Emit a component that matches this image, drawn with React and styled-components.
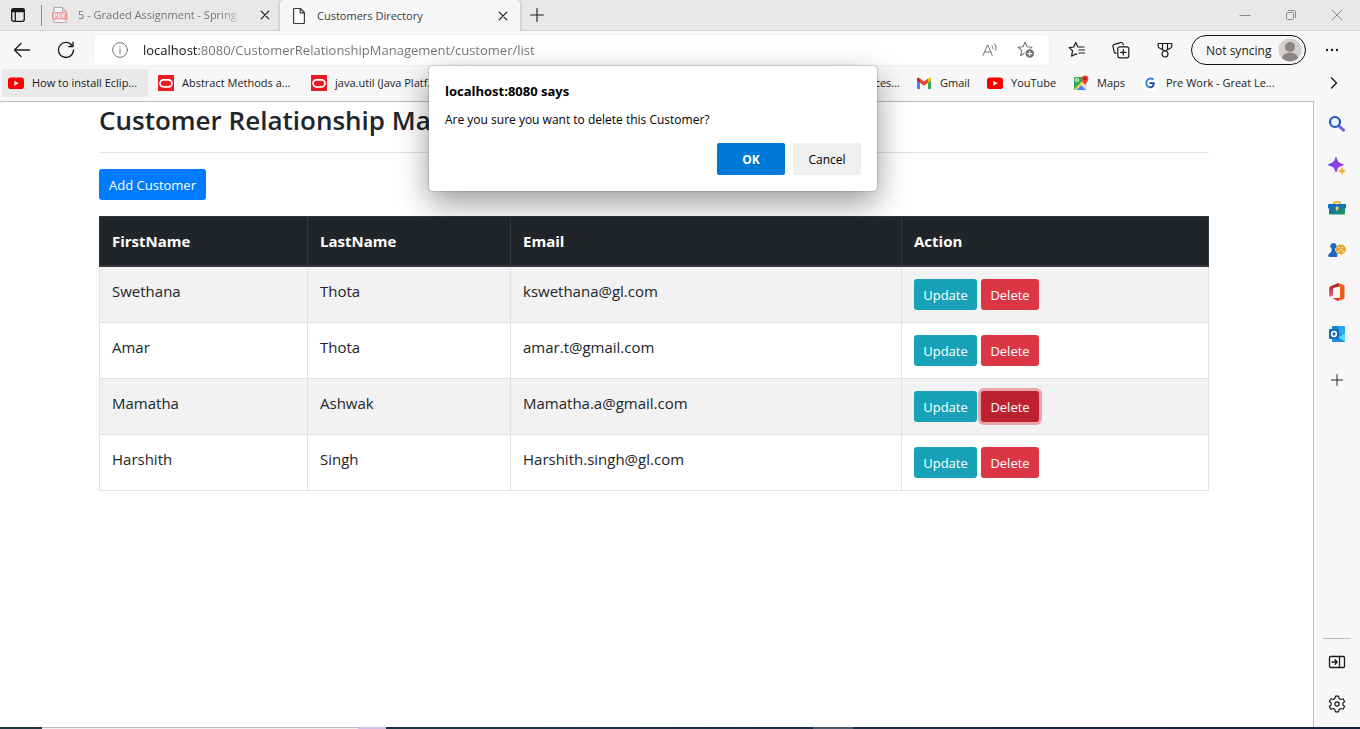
import React from "react";
import styled, { createGlobalStyle, css } from "styled-components";

const GlobalStyle = createGlobalStyle`
  *, *::before, *::after { box-sizing: border-box; }
  body { margin: 0; background: #f7f7f7; font-family: "Open Sans", "Noto Sans", sans-serif; color: #212529; }
  button, input { font-family: inherit; margin: 0; }
  svg { display: block; flex: none; }
`;

/* ---------- browser frame ---------- */

const Browser = styled.div`
  position: relative;
  display: flex;
  flex-direction: column;
  min-height: 100vh;
`;

const IconButton = styled.button`
  display: flex;
  align-items: center;
  justify-content: center;
  flex: none;
  width: ${(p) => p.$w || 24}px;
  height: ${(p) => p.$h || 24}px;
  padding: 0;
  border: 0;
  background: none;
  color: ${(p) => p.$color || "#1b1b1b"};
`;

const TabStrip = styled.header`
  display: flex;
  height: 31px;
  background: #e8e8e8;
  box-shadow: inset 0 -1px #d4d4d4;
`;

const TabMenu = styled.div`
  display: flex;
  align-items: center;
  width: 42px;
  height: 30px;
  padding-left: 6px;
  &::after {
    content: "";
    width: 1px;
    height: 21px;
    margin-left: auto;
    background: #8c8c8c;
  }
`;

const Tab = styled.div`
  display: flex;
  align-items: center;
  width: ${(p) => (p.$active ? 240 : 238)}px;
  height: ${(p) => (p.$active ? 31 : 30)}px;
  padding: 0 5px 0 ${(p) => (p.$active ? 11 : 10)}px;
  gap: 10px;
  font-size: 11px;
  line-height: 16px;
  color: ${(p) => (p.$active ? "#3b3b3b" : "#767676")};
  ${(p) => p.$active && css`
    background: #f7f7f7;
    border-radius: 4px 4px 0 0;
    box-shadow: 0 0 3px rgba(0, 0, 0, 0.3);
    clip-path: inset(0 -4px 0 -4px);
  `}
`;

const TabTitle = styled.span`
  flex: 1;
  overflow: hidden;
  white-space: nowrap;
  ${(p) => p.$fade && css`
    mask-image: linear-gradient(90deg, #000 85%, transparent);
  `}
`;

const WindowControls = styled.div`
  display: flex;
  height: 30px;
  margin-left: auto;
`;

const Toolbar = styled.div`
  display: flex;
  align-items: center;
  height: 38px;
  padding-right: 16px;
  background: #f7f7f7;
`;

const AddressBar = styled.label`
  display: flex;
  align-items: center;
  flex: 1;
  height: 30px;
  margin: 0 12px 0 6px;
  padding: 0 11px 0 18px;
  background: #fff;
  border-radius: 4px;
  box-shadow: 0 0 2px rgba(0, 0, 0, 0.08);
`;

const AddressInput = styled.input`
  flex: 1;
  min-width: 0;
  height: 24px;
  margin-left: 15px;
  padding: 0;
  border: 0;
  outline: 0;
  font-size: 13px;
  line-height: 24px;
  color: transparent;
  background: linear-gradient(90deg, #111 56px, #717171 56px);
  background-clip: text;
  -webkit-background-clip: text;
`;

const ToolGroup = styled.div`
  display: flex;
  align-items: center;
  gap: 12px;
`;

const SyncButton = styled.button`
  display: flex;
  align-items: center;
  justify-content: space-between;
  width: 115px;
  height: 30px;
  margin: 0 14px 0 10px;
  padding: 0 3px 0 14px;
  border: 1px solid #111;
  border-radius: 15px;
  background: none;
  font-size: 12px;
  color: #1b1b1b;
  white-space: nowrap;
`;

const BookmarkBar = styled.nav`
  display: flex;
  align-items: flex-start;
  gap: 4px;
  height: 32px;
  padding: 0 14px 0 2px;
  background: #f7f7f7;
`;

const Bookmark = styled.a`
  display: flex;
  align-items: center;
  flex: none;
  gap: 8px;
  width: ${(p) => p.$w}px;
  height: 28px;
  padding: 0 6px;
  border-radius: 3px;
  background: ${(p) => (p.$hover ? "#e9e9e9" : "none")};
  font-size: 11px;
  line-height: 16px;
  color: #1b1b1b;
  text-decoration: none;
  white-space: nowrap;
`;

const CoveredBookmark = styled(Bookmark)`
  flex: 1;
  justify-content: flex-end;
`;

const BookmarkOverflow = styled.div`
  display: flex;
  justify-content: flex-end;
  width: 56px;
`;

const Body = styled.div`
  display: flex;
  flex: 1;
`;

const Viewport = styled.main`
  flex: 1;
  min-width: 0;
  padding-right: 5px;
  background: #fff;
  border: solid #bdbdbd;
  border-width: 1px 1px 0 0;
`;

const Sidebar = styled.aside`
  display: flex;
  flex-direction: column;
  align-items: center;
  gap: 18px;
  width: 46px;
  padding: 11px 0;
`;

const SidebarEnd = styled.div`
  display: flex;
  flex-direction: column;
  align-items: center;
  gap: 18px;
  width: 28px;
  margin-top: auto;
  padding-top: 11px;
  border-top: 1px solid #bdbdbd;
`;

const Taskbar = styled.footer`
  display: flex;
  height: 2px;
  background: linear-gradient(90deg, #21393f, #1c2f44 60%, #16213f);
`;

const TaskbarPart = styled.span`
  width: ${(p) => p.$w}px;
  background: ${(p) => p.$bg || "none"};
`;

/* ---------- page ---------- */

const Container = styled.div`
  max-width: 1140px;
  margin: 0 auto;
  padding: 0 15px;
`;

const Title = styled.h3`
  margin: 0;
  padding: 1px 0 15px;
  font-size: 26px;
  font-weight: 600;
  line-height: 34px;
  border-bottom: 1px solid #e2e2e2;
`;

const buttonColors = {
  primary: "#007bff",
  info: "#17a2b8",
  danger: "#dc3545",
  dangerActive: "#bd2130",
};

const ActionButton = styled.button`
  height: 31px;
  width: ${(p) => p.$w}px;
  padding: 2px 0 0;
  border: 0;
  border-radius: 3px;
  background: ${(p) => buttonColors[p.$kind]};
  color: #fff;
  font-size: 13px;
  line-height: 21px;
  white-space: nowrap;
  ${(p) => p.$kind === "dangerActive" && css`
    box-shadow: 0 0 0 3px rgba(225, 83, 97, 0.5);
  `}
`;

const PageActions = styled.div`
  display: flex;
  padding: 16px 0;
`;

const CustomerTable = styled.table`
  width: 100%;
  table-layout: fixed;
  border-collapse: collapse;
  font-size: 15px;
  line-height: 24px;
`;

const HeadCell = styled.th`
  width: ${(p) => (p.$w ? `${p.$w}px` : "auto")};
  height: 49px;
  padding: 0 12px;
  border: 1px solid #32383e;
  border-bottom-width: 2px;
  background: #212529;
  color: #fff;
  font-weight: 700;
  text-align: left;
`;

const Row = styled.tr`
  background: ${(p) => (p.$striped ? "#f2f2f2" : "#fff")};
`;

const Cell = styled.td`
  height: 56px;
  padding: 12px 12px;
  border: 1px solid #dee2e6;
  vertical-align: top;
`;

const ButtonPair = styled.div`
  display: flex;
  gap: 4px;
`;

/* ---------- dialog ---------- */

const DialogLayer = styled.div`
  position: absolute;
  top: 66px;
  left: 0;
  right: 54px;
  display: flex;
  justify-content: center;
`;

const Dialog = styled.section`
  width: 448px;
  padding: 16px;
  border-radius: 4px;
  background: #fff;
  color: #000;
  box-shadow: 0 0 2px rgba(0, 0, 0, 0.4), 0 12px 32px rgba(0, 0, 0, 0.4);
`;

const DialogTitle = styled.h2`
  margin: 0 0 10px;
  font-size: 13px;
  font-weight: 700;
  line-height: 18px;
`;

const DialogText = styled.p`
  margin: 0 0 13px;
  font-size: 12px;
  line-height: 20px;
`;

const DialogButtons = styled.div`
  display: flex;
  justify-content: flex-end;
  gap: 8px;
`;

const DialogButton = styled.button`
  width: 68px;
  height: 32px;
  padding: 0;
  border: 0;
  border-radius: 2px;
  background: ${(p) => (p.$primary ? "#0078d7" : "#efefef")};
  color: ${(p) => (p.$primary ? "#fff" : "#000")};
  font-size: 12px;
  font-weight: ${(p) => (p.$primary ? 700 : 500)};
`;

/* ---------- icons ---------- */

const Line = ({ size = 16, box = size, w = 1, children }) => (
  <svg width={size} height={size} viewBox={`0 0 ${box} ${box}`} fill="none" stroke="currentColor" strokeWidth={w} strokeLinecap="round" strokeLinejoin="round">
    {children}
  </svg>
);

const TabMenuIcon = () => (
  <Line w={1.3}>
    <rect x="1.7" y="1.7" width="12.6" height="12.6" rx="2" />
    <path d="M2 2.500h12v2.200H2z" fill="currentColor" />
    <path d="M5.3 5v9" />
  </Line>
);
const PdfIcon = () => (
  <svg width="16" height="16" viewBox="0 0 16 16">
    <path d="M2 .5h8.500L14 4v11.500H2z" fill="#f4f4f4" stroke="#a9a9a9" />
    <path d="M10.500.5V4H14" fill="none" stroke="#a9a9a9" />
    <rect x="0" y="5" width="15.500" height="7.500" rx="1" fill="#f19c9c" />
    <path d="M2.500 11.200V6.700h1.100a1.200 1.200 0 0 1 0 2.500H2.500M6.700 6.700V11h.7c2.200 0 2.200-4.300 0-4.300zM13.500 6.700H11v4.500M11 9h2" fill="none" stroke="#fff" strokeWidth="1" />
  </svg>
);
const PageIcon = () => (
  <Line w={1.2}>
    <path d="M2.600 1.500a1 1 0 0 1 1-1h5.800l4 4v10a1 1 0 0 1-1 1H3.600a1 1 0 0 1-1-1zM9.200.8v4h4" fill="#fff" />
  </Line>
);
const CloseIcon = () => <Line size={10} w={1.2}><path d="M1.200 1.200l7.600 7.600M8.800 1.200L1.200 8.800" /></Line>;
const PlusIcon = ({ size = 14 }) => <Line size={size} box={14} w={1.1}><path d="M7 .6v12.800M.6 7h12.800" /></Line>;
const MinimizeIcon = () => <Line size={12}><path d="M1 6.500h10" /></Line>;
const RestoreIcon = () => (
  <Line size={12}>
    <rect x="1.500" y="3.500" width="7" height="7" rx="1" />
    <path d="M3.500 1.500H9a1.500 1.500 0 0 1 1.500 1.500v5.500" />
  </Line>
);
const WindowCloseIcon = () => <Line size={12}><path d="M1 1l10 10M11 1L1 11" /></Line>;
const BackIcon = () => <Line size={18} w={1.3}><path d="M16.500 9h-15M8 2.500L1.500 9 8 15.500" /></Line>;
const ReloadIcon = () => <Line size={18} w={1.3}><path d="M15.500 5.200A7.500 7.500 0 1 0 16.500 9M16 1.200v4.300h-4.300" /></Line>;
const InfoIcon = () => <Line w={1}><circle cx="8" cy="8" r="7.400" /><path d="M8 7v4.500M8 4.500v.4" /></Line>;
const ReadAloudIcon = () => (
  <Line size={16} w={1}>
    <path d="M1 13.500L5.400 3h.4l4.400 10.500M2.500 10h6.300" />
    <path d="M10 3.500c1 .9 1.200 2.200.8 3.500M12.300 1.500c1.900 2 2.300 4.500 1.300 7" />
  </Line>
);
const starPath = "M8 1.200l2 4.500 5 .5-3.700 3.300 1 4.900L8 12l-4.300 2.400 1-4.900L1 6.200l5-.5z";
const AddFavoriteIcon = () => (
  <Line size={18} w={1.100}>
    <path d={starPath} />
    <circle cx="12.800" cy="12.600" r="4.800" fill="#6e6e6e" stroke="#fff" />
    <path d="M12.800 10.400v4.400M10.600 12.600H15" stroke="#fff" />
  </Line>
);
const FavoritesIcon = () => (
  <Line size={18} w={1.200}>
    <path d="M16 6h-4.800L9.700 5.800 7.700 1.600 5.700 6l-4.500.6 3.300 3.200-.9 5.400 4-2.300 1 .5M11 9h5.500M11 12h5.500" />
  </Line>
);
const CollectionsIcon = () => (
  <Line size={18} w={1.200}>
    <path d="M4.200 12.300c-1-.1-1.700-.7-2-1.600L1 5.700A2 2 0 0 1 2.400 3.300L8.600 1.600a2 2 0 0 1 2.400 1.300l.3.900" />
    <rect x="5.800" y="5.800" width="11" height="11" rx="2" />
    <path d="M11.300 8.500v5.600M8.500 11.300h5.600" />
  </Line>
);
const RewardsIcon = () => (
  <Line size={16} w={1.200}>
    <path d="M1.200 1.500h13.600v2.600c0 1-.4 1.500-1.100 1.900L8 9 2.300 6C1.600 5.600 1.200 5.100 1.200 4.100zM5.500 1.500v6M10.500 1.500v6" />
    <circle cx="8" cy="12" r="3" fill="#f7f7f7" />
  </Line>
);
const AvatarIcon = () => (
  <svg width="24" height="24" viewBox="0 0 24 24">
    <circle cx="12" cy="12" r="11.500" fill="#d2d0ce" />
    <circle cx="12" cy="9" r="5" fill="#8a8583" />
    <path d="M4 20c1-7 15-7 16 0a11.500 11.500 0 0 1-16 0z" fill="#8a8583" />
  </svg>
);
const MoreIcon = () => (
  <svg width="16" height="16" viewBox="0 0 16 16" fill="currentColor">
    <circle cx="3" cy="8" r="1.200" /><circle cx="8" cy="8" r="1.200" /><circle cx="13" cy="8" r="1.200" />
  </svg>
);
const ChevronIcon = () => <Line size={12} w={1.400}><path d="M3.500 1l5 5-5 5" /></Line>;

const YouTubeIcon = () => (
  <svg width="16" height="16" viewBox="0 0 16 16">
    <rect x="0" y="2.500" width="16" height="11.500" rx="2.800" fill="#f00" />
    <path d="M6.300 5.700v5l4.300-2.500z" fill="#fff" />
  </svg>
);
const OracleIcon = () => (
  <svg width="16" height="16" viewBox="0 0 16 16">
    <path d="M0 0h16v16H0z" fill="#ea1b22" />
    <rect x="2" y="4.800" width="12" height="7" rx="3.500" fill="none" stroke="#fff" strokeWidth="1.700" />
  </svg>
);
const GmailIcon = () => (
  <svg width="16" height="16" viewBox="0 0 16 16">
    <path d="M1 4v10h3V7z" fill="#4285f4" />
    <path d="M15 4v10h-3V7z" fill="#34a853" />
    <path d="M1 3.500v2l3 2.200V4L3.200 3C2.200 2.300 1 2.700 1 3.500z" fill="#c5221f" />
    <path d="M15 3.500v2l-3 2.200V4l.8-1c1-.7 2.200-.3 2.200.5z" fill="#fbbc04" />
    <path d="M4 3.500l4 3 4-3v4.200L8 10.800 4 7.700z" fill="#ea4335" />
  </svg>
);
const MapsIcon = () => (
  <svg width="16" height="16" viewBox="0 0 16 16">
    <rect x="1" y="2" width="13" height="13" rx="1.500" fill="#dbe4ea" />
    <path d="M1 3.500C1 2.500 1.500 2 2.500 2H10l1 4-9 9c-.6-.2-1-.7-1-1.500z" fill="#34a853" />
    <path d="M1.500 14l9-9 1.500 1.500L3.500 15z" fill="#fbd24c" />
    <path d="M3.500 15L8.200 10.300 13 15z" fill="#4285f4" />
    <circle cx="4" cy="5" r="1.500" fill="none" stroke="#fff" />
    <path d="M12 10.500C11.500 8 8.700 7 8.700 3.700a3.300 3.300 0 0 1 6.600 0C15.300 7 12.500 8 12 10.500z" fill="#ea4335" />
    <circle cx="12" cy="3.700" r="1.200" fill="#8c1c14" />
  </svg>
);
const GreatLearningIcon = () => (
  <svg width="16" height="16" viewBox="0 0 16 16">
    <circle cx="8" cy="8" r="8" fill="#fff" />
    <path d="M11.500 4.500A4.500 4.500 0 1 0 8 12.500" fill="none" stroke="#2c7be0" strokeWidth="1.900" />
    <path d="M7.500 8.200h4.300c0 2.200-1.500 4-3.800 4.200" fill="none" stroke="#1744a0" strokeWidth="1.800" />
  </svg>
);

const SearchIcon = () => (
  <svg width="18" height="18" viewBox="0 0 18 18">
    <path d="M11.500 11.500l4 3.700" stroke="#7b5bd6" strokeWidth="3" strokeLinecap="round" />
    <circle cx="7" cy="7" r="5" fill="#eaf4fd" stroke="#1b56c4" strokeWidth="2.200" />
  </svg>
);
const DiscoverIcon = () => (
  <svg width="18" height="18" viewBox="0 0 18 18">
    <defs><linearGradient id="spark" x1="0" y1="0" x2="1" y2="1"><stop stopColor="#4a63e8" /><stop offset=".5" stopColor="#8a3be8" /><stop offset="1" stopColor="#b93be0" /></linearGradient></defs>
    <path d="M8 .8c.9 4.200 2.300 5.700 7 6.900-4.700 1.200-6.100 2.700-7 6.900-.9-4.200-2.400-5.700-7.200-6.900C5.600 6.500 7.100 5 8 .8z" fill="url(#spark)" stroke="url(#spark)" strokeWidth="1.400" strokeLinejoin="round" />
    <path d="M14 10.200c.5 2.300 1.300 3.100 3.700 3.700-2.400.6-3.200 1.400-3.700 3.700-.5-2.300-1.300-3.100-3.700-3.700 2.400-.6 3.200-1.400 3.700-3.700z" fill="#f8ac1e" stroke="#f8ac1e" strokeWidth=".6" />
  </svg>
);
const ToolsIcon = () => (
  <svg width="18" height="18" viewBox="0 0 18 18">
    <defs><linearGradient id="case" x1="0" y1="0" x2="1" y2="1"><stop stopColor="#1565c6" /><stop offset="1" stopColor="#1e9b58" /></linearGradient></defs>
    <path d="M6 5V4a1 1 0 0 1 1-1h4a1 1 0 0 1 1 1v1" fill="none" stroke="#eba21b" strokeWidth="1.600" />
    <rect x="1" y="8" width="16" height="7.500" rx="1" fill="url(#case)" />
    <rect x="0" y="5" width="18" height="4.500" rx="1" fill="#1470b8" />
    <rect x="7.800" y="7.500" width="2.600" height="4" rx=".8" fill="#ffce3a" />
  </svg>
);
const GamesIcon = () => (
  <svg width="18" height="18" viewBox="0 0 18 18">
    <path d="M5.500 2a3 3 0 0 1 2.300 5L7 7.500c.2 2.500 1 4 2.300 5v2.700c0 .6-.6.8-1 .8H1.500c-.8 0-1.300-.5-1.300-1.200 0-1.500 1.300-2.300 2.300-3 .8-.8 1.200-2.300 1.200-4.300A3 3 0 0 1 5.500 2z" fill="#1c63c4" />
    <circle cx="12.800" cy="8.500" r="5" fill="#eda12c" />
    <path d="M11 6.500v.1M14.500 6.500v.1M12.800 8.800v.1M10.700 10.500v.1M15 10.500v.1" stroke="#fff0bd" strokeWidth="1.700" strokeLinecap="round" />
  </svg>
);
const OfficeIcon = () => (
  <svg width="18" height="18" viewBox="0 0 18 18">
    <defs><linearGradient id="office" x1="0" y1="0" x2="0" y2="1"><stop stopColor="#a81d1d" /><stop offset="1" stopColor="#e9657a" /></linearGradient></defs>
    <path d="M10.500 0L3 3A2.500 2.500 0 0 0 1.200 5.200v7.300c0 1.200.8 1.500 1.700 1L5 12.200V6.300c0-.6.3-1 .8-1.200L12 3.300z" fill="url(#office)" />
    <path d="M10.500 0l4.800 1.700a1.800 1.800 0 0 1 1.200 1.700v11.200a1.800 1.800 0 0 1-1.200 1.700L10.500 18l1.500-2.500V3.300z" fill="#ed5f17" />
    <path d="M4.500 15H12v.5L10.500 18c-.6.1-1 0-1.500-.3z" fill="#e0402e" />
  </svg>
);
const OutlookIcon = () => (
  <svg width="18" height="18" viewBox="0 0 18 18">
    <path d="M5 1h11a1 1 0 0 1 1 1v8H4V2a1 1 0 0 1 1-1z" fill="#28a8ea" />
    <path d="M4 1h6.500v5H4z" fill="#1684d4" />
    <path d="M4 9h13v7a1 1 0 0 1-1 1H5a1 1 0 0 1-1-1z" fill="#1a8fd8" />
    <path d="M17 8v8.500L10 12.500z" fill="#50d9ff" />
    <rect x="1" y="4" width="10" height="10" rx="1" fill="#0f6cbd" />
    <ellipse cx="6" cy="9" rx="2.300" ry="2.500" fill="none" stroke="#fff" strokeWidth="1.600" />
  </svg>
);
const HideSidebarIcon = () => (
  <Line size={18} w={1.300}>
    <rect x="1.500" y="3.500" width="15" height="11" rx="1.200" />
    <path d="M11.500 3.500v11M4 9h5M7 6.800L9.200 9 7 11.200" />
  </Line>
);
const SettingsIcon = () => (
  <Line size={18} w={1.200}>
    <path d="M7.500 1.200h3l.6 2.400 1.600.9 2.300-.7 1.600 2.700L14.900 8.100v1.800l1.700 1.600L15 14.200l-2.300-.7-1.600.9-.6 2.400h-3l-.6-2.400-1.600-.9-2.300.7-1.600-2.700 1.700-1.600V8.100L1.400 6.500 3 3.800l2.300.7 1.600-.9z" />
    <circle cx="9" cy="9" r="2.200" />
  </Line>
);

/* ---------- data ---------- */

const sidebarApps = [
  ["Search", SearchIcon],
  ["Discover", DiscoverIcon],
  ["Tools", ToolsIcon],
  ["Games", GamesIcon],
  ["Microsoft 365", OfficeIcon],
  ["Outlook", OutlookIcon],
];

const startBookmarks = [
  { label: "How to install Eclip...", icon: YouTubeIcon, width: 146, hover: true },
  { label: "Abstract Methods a...", icon: OracleIcon, width: 149 },
  { label: "java.util (Java Platf...", icon: OracleIcon, width: 149 },
];

const endBookmarks = [
  { label: "Gmail", icon: GmailIcon, width: 67 },
  { label: "YouTube", icon: YouTubeIcon, width: 82 },
  { label: "Maps", icon: MapsIcon, width: 65 },
  { label: "Pre Work - Great Le...", icon: GreatLearningIcon, width: 150 },
];

const customers = [
  { first: "Swethana", last: "Thota", email: "kswethana@gl.com" },
  { first: "Amar", last: "Thota", email: "amar.t@gmail.com" },
  { first: "Mamatha", last: "Ashwak", email: "Mamatha.a@gmail.com", deleting: true },
  { first: "Harshith", last: "Singh", email: "Harshith.singh@gl.com" },
];

const BookmarkLink = ({ label, icon: Icon, width, hover }) => (
  <Bookmark href="#" $w={width} $hover={hover}><Icon />{label}</Bookmark>
);

export default function App() {
  return (
    <Browser>
      <GlobalStyle />
      <TabStrip>
        <TabMenu><IconButton aria-label="Tab actions"><TabMenuIcon /></IconButton></TabMenu>
        <Tab>
          <PdfIcon />
          <TabTitle $fade>5 - Graded Assignment - Spring</TabTitle>
          <IconButton $w={20} aria-label="Close tab"><CloseIcon /></IconButton>
        </Tab>
        <Tab $active>
          <PageIcon />
          <TabTitle>Customers Directory</TabTitle>
          <IconButton $w={24} aria-label="Close tab"><CloseIcon /></IconButton>
        </Tab>
        <IconButton $w={34} $h={30} aria-label="New tab"><PlusIcon /></IconButton>
        <WindowControls>
          <IconButton $w={46} $h={30} $color="#8a8a8a" aria-label="Minimize"><MinimizeIcon /></IconButton>
          <IconButton $w={46} $h={30} $color="#8a8a8a" aria-label="Restore"><RestoreIcon /></IconButton>
          <IconButton $w={46} $h={30} $color="#8a8a8a" aria-label="Close"><WindowCloseIcon /></IconButton>
        </WindowControls>
      </TabStrip>

      <Toolbar>
        <IconButton $w={44} aria-label="Back"><BackIcon /></IconButton>
        <IconButton $w={44} aria-label="Reload"><ReloadIcon /></IconButton>
        <AddressBar>
          <IconButton $w={16} $color="#757575" aria-label="Site information"><InfoIcon /></IconButton>
          <AddressInput aria-label="Address" type="text" defaultValue="localhost:8080/CustomerRelationshipManagement/customer/list" />
          <ToolGroup>
            <IconButton $color="#757575" aria-label="Read aloud"><ReadAloudIcon /></IconButton>
            <IconButton $color="#757575" aria-label="Add to favorites"><AddFavoriteIcon /></IconButton>
          </ToolGroup>
        </AddressBar>
        <ToolGroup>
          <IconButton $w={32} aria-label="Favorites"><FavoritesIcon /></IconButton>
          <IconButton $w={32} aria-label="Collections"><CollectionsIcon /></IconButton>
          <IconButton $w={32} aria-label="Rewards"><RewardsIcon /></IconButton>
        </ToolGroup>
        <SyncButton>Not syncing<AvatarIcon /></SyncButton>
        <IconButton aria-label="Settings and more"><MoreIcon /></IconButton>
      </Toolbar>

      <BookmarkBar>
        {startBookmarks.map((b) => <BookmarkLink key={b.label} {...b} />)}
        <CoveredBookmark href="#">ces...</CoveredBookmark>
        {endBookmarks.map((b) => <BookmarkLink key={b.label} {...b} />)}
        <BookmarkOverflow>
          <IconButton $h={28} aria-label="More bookmarks"><ChevronIcon /></IconButton>
        </BookmarkOverflow>
      </BookmarkBar>

      <Body>
        <Viewport>
          <Container>
            <Title>Customer Relationship Management</Title>
            <PageActions><ActionButton $kind="primary" $w={107}>Add Customer</ActionButton></PageActions>
            <CustomerTable>
              <thead>
                <tr>
                  <HeadCell $w={208}>FirstName</HeadCell>
                  <HeadCell $w={203}>LastName</HeadCell>
                  <HeadCell $w={391}>Email</HeadCell>
                  <HeadCell>Action</HeadCell>
                </tr>
              </thead>
              <tbody>
                {customers.map((c, i) => (
                  <Row key={c.email} $striped={i % 2 === 0}>
                    <Cell>{c.first}</Cell>
                    <Cell>{c.last}</Cell>
                    <Cell>{c.email}</Cell>
                    <Cell>
                      <ButtonPair>
                        <ActionButton $kind="info" $w={63}>Update</ActionButton>
                        <ActionButton $kind={c.deleting ? "dangerActive" : "danger"} $w={58}>Delete</ActionButton>
                      </ButtonPair>
                    </Cell>
                  </Row>
                ))}
              </tbody>
            </CustomerTable>
          </Container>
        </Viewport>
        <Sidebar>
          {sidebarApps.map(([name, Icon]) => (
            <IconButton key={name} aria-label={name}><Icon /></IconButton>
          ))}
          <IconButton $h={32} aria-label="Customize sidebar"><PlusIcon size={12} /></IconButton>
          <SidebarEnd>
            <IconButton aria-label="Hide sidebar"><HideSidebarIcon /></IconButton>
            <IconButton aria-label="Settings"><SettingsIcon /></IconButton>
          </SidebarEnd>
        </Sidebar>
      </Body>

      <Taskbar>
        <TaskbarPart $w={42} />
        <TaskbarPart $w={316} $bg="linear-gradient(#bdbdbd 50%, #f0f0f0 50%)" />
        <TaskbarPart $w={28} $bg="#d3bfe8" />
        <TaskbarPart $w={427} />
        <TaskbarPart $w={40} $bg="#4a5a68" />
      </Taskbar>

      <DialogLayer>
        <Dialog role="alertdialog" aria-labelledby="dialog-title" aria-describedby="dialog-text">
          <DialogTitle id="dialog-title">localhost:8080 says</DialogTitle>
          <DialogText id="dialog-text">Are you sure you want to delete this Customer?</DialogText>
          <DialogButtons>
            <DialogButton $primary>OK</DialogButton>
            <DialogButton>Cancel</DialogButton>
          </DialogButtons>
        </Dialog>
      </DialogLayer>
    </Browser>
  );
}
